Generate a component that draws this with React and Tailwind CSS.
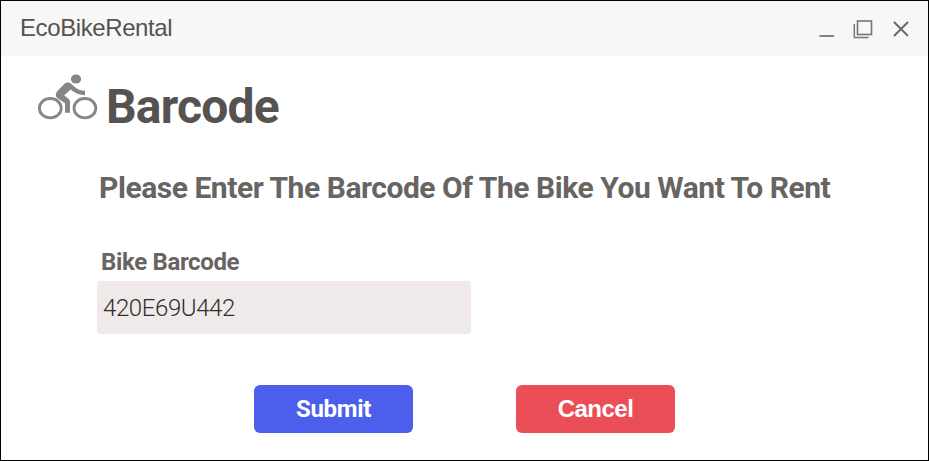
function Cyclist() {
  return (
    <svg width="60" height="46" viewBox="0 0 60 46" fill="none" className="shrink-0">
      <ellipse cx="12.3" cy="34.2" rx="10.9" ry="9.7" stroke="#888684" strokeWidth="2.8" />
      <ellipse cx="46.9" cy="34.2" rx="10.9" ry="9.7" stroke="#888684" strokeWidth="2.8" />
      <ellipse cx="38" cy="5" rx="5.1" ry="4.5" fill="#888684" />
      <path d="M27 9.3Q29.7 7.6 32.5 9.3L37.8 13.7Q41.3 16.7 47 16.8V21.2Q39.3 21 34.2 16.8L32.7 15.5L26.2 21.2L31.2 25.6Q32 26.4 32 27.8V38.8H27V29.3L19.2 23.9Q16.3 21.5 19.2 17.3Z" fill="#888684" />
    </svg>
  );
}

function TitleBar() {
  return (
    <header className="flex h-[55px] items-center justify-between bg-[#f7f7f7] pr-[19px] pl-[19px]">
      <span className="pb-0.5 font-['Liberation_Sans',sans-serif] text-2xl tracking-[-0.4px] text-[#565250]">EcoBikeRental</span>
      <div className="flex h-5 items-center">
        <svg width="16" height="20" viewBox="0 0 16 20" stroke="#757575" strokeWidth="1.8">
          <path d="M.5 17H15" />
        </svg>
        <svg width="20" height="20" viewBox="0 0 20 20" fill="none" stroke="#757575" className="ml-[18px]">
          <rect x="4.5" y="2" width="14" height="13.5" strokeWidth="1.6" />
          <path d="M1.3 5V18.5H15.5" strokeWidth="1.5" />
        </svg>
        <svg width="16" height="16" viewBox="0 0 16 16" stroke="#686868" strokeWidth="1.9" className="mt-px ml-5">
          <path d="M1 1L15 15M15 1L1 15" />
        </svg>
      </div>
    </header>
  );
}

export default function App() {
  return (
    <div className="h-[461px] w-[929px] overflow-hidden border border-black bg-white font-['Roboto',sans-serif]">
      <TitleBar />
      <main>
        <div className="flex items-start gap-2 pt-[18px] pl-[37px]">
          <Cyclist />
          <h1 className="mt-[5px] text-5xl leading-[56px] font-bold tracking-[-0.8px] text-[#565250]">Barcode</h1>
        </div>
        <h2 className="mt-[35px] ml-[98px] text-[30px] leading-9 font-bold tracking-[-0.45px] whitespace-nowrap text-[#686462]">
          Please Enter The Barcode Of The Bike You Want To Rent
        </h2>
        <form className="ml-24">
          <label htmlFor="barcode" className="mt-[42px] block pl-1 text-2xl leading-7 font-bold tracking-[-0.35px] text-[#686462]">
            Bike Barcode
          </label>
          <input
            id="barcode"
            defaultValue="420E69U442"
            className="mt-[5px] block h-[53px] w-[374px] rounded bg-[#efe9e9] px-[6px] text-2xl font-light tracking-[-0.4px] text-[#302d2b] outline-none"
          />
          <div className="mt-[51px] ml-[157px] flex gap-[103px] font-['Liberation_Sans',sans-serif] text-2xl font-bold tracking-[-0.5px] text-white">
            <button type="button" className="h-12 w-[159px] rounded-md bg-[#4c5eec] font-['Roboto',sans-serif] tracking-[-0.3px]">Submit</button>
            <button type="button" className="h-12 w-[159px] rounded-md bg-[#eb4e57]">Cancel</button>
          </div>
        </form>
      </main>
    </div>
  );
}
